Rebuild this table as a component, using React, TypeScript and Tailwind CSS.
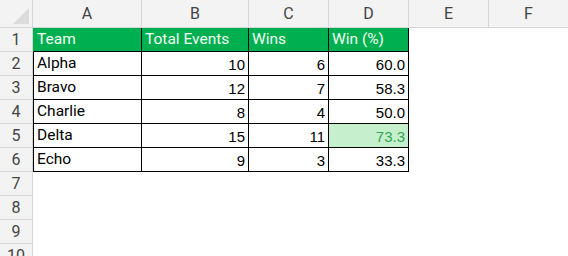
import React from "react";

const cols = ["A", "B", "C", "D", "E", "F"];
const data: (string | number)[][] = [
  ["Team", "Total Events", "Wins", "Win (%)"],
  ["Alpha", 10, 6, "60.0"],
  ["Bravo", 12, 7, "58.3"],
  ["Charlie", 8, 4, "50.0"],
  ["Delta", 15, 11, "73.3"],
  ["Echo", 9, 3, "33.3"],
];

const textFont = { fontFamily: 'Roboto, "Noto Sans", sans-serif' };
const numFont = { fontFamily: '"Liberation Sans", Arial, sans-serif' };

export default function App() {
  const rows = Array.from({ length: 10 }, (_, i) => i + 1);
  return (
    <div className="w-[568px] h-[256px] overflow-hidden bg-white">
      <div className="grid grid-cols-[33px_109px_107px_80px_80px_80px_80px] grid-rows-[28px_repeat(10,24px)]">
        {/* corner */}
        <div className="relative bg-[#f3f3f3] border-r border-b border-[#d6d6d6]">
          <svg className="absolute right-[3px] bottom-[3px]" width="16" height="16" viewBox="0 0 16 16">
            <polygon points="16,0 16,16 0,16" fill="#dcdcdc" />
          </svg>
        </div>
        {cols.map((c) => (
          <div
            key={c}
            className="flex items-center justify-center bg-[#f3f3f3] border-r border-b border-[#d6d6d6] text-[16px] text-[#444] leading-none"
            style={textFont}
          >
            {c}
          </div>
        ))}
        {rows.map((r) => (
          <React.Fragment key={r}>
            <div
              className="flex items-center justify-center bg-[#f3f3f3] border-r border-b border-[#d6d6d6] text-[16px] text-[#444] leading-none pt-[1px]"
              style={textFont}
            >
              {r}
            </div>
            {cols.map((c, ci) => {
              const row = data[r - 1];
              if (!row || ci > 3) {
                return <div key={c} className="bg-white" />;
              }
              const v = row[ci];
              const isHeader = r === 1;
              const isNum = !isHeader && ci > 0;
              const isHl = r === 5 && ci === 3;
              const cls = [
                "flex items-center leading-none border-r border-b border-black pt-[1px]",
                isNum ? "text-[15px]" : "text-[15.5px]",
                isHeader ? "bg-[#00b050] text-[#f4fff4] border-b-black" : isHl ? "bg-[#c6efce] text-[#33a653]" : "bg-white text-black",
                isNum ? "justify-end pr-[3px]" : "justify-start pl-[3px]",
                ci === 0 && !isHeader ? "border-l border-l-black" : "",
                ci === 0 && isHeader ? "border-l border-l-[#00b050]" : "",
              ].join(" ");
              return (
                <div key={c} className={cls} style={isNum ? numFont : textFont}>
                  {v}
                </div>
              );
            })}
          </React.Fragment>
        ))}
      </div>
    </div>
  );
}
